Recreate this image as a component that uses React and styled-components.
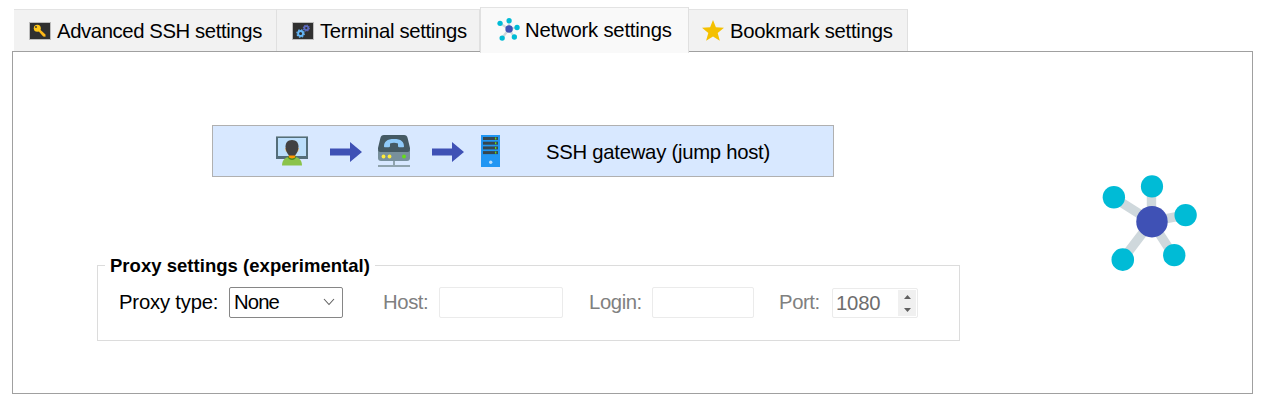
import React from "react";
import styled, { createGlobalStyle } from "styled-components";

const GlobalStyle = createGlobalStyle`
  * { box-sizing: border-box; }
  body { margin: 0; background: #fff; }
  svg { display: block; flex: none; }
`;

const Page = styled.div`
  width: 1267px;
  height: 400px;
  padding: 7px 14px 0 12px;
  background: #fff;
  color: #000;
  font: 20.3px/24px "Liberation Sans", Arial, sans-serif;
  white-space: nowrap;
`;

const TabBar = styled.div`
  display: flex;
  align-items: flex-end;
  height: 44px;
  padding-left: 2px;
`;

const Tab = styled.div`
  position: relative;
  z-index: ${(p) => (p.$active ? 1 : 0)};
  display: flex;
  align-items: center;
  flex: none;
  width: ${(p) => p.$width}px;
  height: ${(p) => (p.$active ? 46 : 42)}px;
  margin-bottom: ${(p) => (p.$active ? -2 : 0)}px;
  padding: 0 0 ${(p) => (p.$active ? 2 : 0)}px ${(p) => p.$inset || 15}px;
  border-top: 1px solid #e3e3e3;
  border-right: 1px solid #e0e0e0;
  border-left: ${(p) => (p.$active ? "1px solid #e0e0e0" : "none")};
  background: ${(p) => (p.$active ? "#f9f9f9" : "#f2f2f2")};
`;

const Label = styled.span`
  margin-left: ${(p) => p.$gap || 0}px;
  letter-spacing: ${(p) => p.$track || 0}px;
`;

const Panel = styled.div`
  display: flex;
  justify-content: space-between;
  width: 1241px;
  height: 343px;
  padding-left: 84px;
  border: 1px solid #a0a0a0;
`;

const Content = styled.div`
  display: flex;
  flex-direction: column;
  width: 863px;
  padding-top: 73px;
`;

const GatewayButton = styled.button`
  display: flex;
  align-items: center;
  width: 622px;
  height: 52px;
  margin: 0 0 0 115px;
  padding: 0 0 0 63px;
  border: 1px solid #b0b0b0;
  background: #d8e8ff;
  color: inherit;
  font: inherit;
`;

const GatewayLabel = styled(Label)`
  padding-top: 2px;
`;

const Route = styled.div`
  display: flex;
  align-items: center;
  width: 270px;
`;

const RouteArrow = styled.div`
  margin: 2px ${(p) => p.$after}px 0 22px;
`;

const ProxyGroup = styled.fieldset`
  display: block;
  min-width: 0;
  width: 863px;
  height: 87px;
  margin: 77px 0 0;
  padding: 0 0 0 21px;
  border: 1px solid #dcdcdc;
`;

const ProxyLegend = styled.legend`
  height: 22px;
  margin-left: -14px;
  padding: 0 5px;
  font-size: 18.5px;
  font-weight: bold;
  line-height: 24px;
  letter-spacing: 0.03px;
`;

const Fields = styled.div`
  display: flex;
  align-items: flex-start;
  padding-top: 11px;
  letter-spacing: -0.2px;
`;

const FieldLabel = styled.label`
  width: ${(p) => p.$width}px;
  margin-top: 3px;
  color: ${(p) => (p.$muted ? "#808080" : "#000")};
  letter-spacing: ${(p) => (p.$muted ? -0.4 : -0.2)}px;
`;

const Field = styled.div`
  display: flex;
  align-items: center;
  justify-content: space-between;
  width: ${(p) => p.$width}px;
  height: 31px;
  margin-right: ${(p) => p.$after}px;
  border: 1px solid #ebebeb;
  border-radius: 2px;
`;

const SelectBox = styled(Field)`
  padding: 0 7px 2px 4px;
  border-color: #868686;
  letter-spacing: -0.9px;
`;

const Spinner = styled(Field)`
  height: 30px;
  margin-top: 1px;
  padding: 0 1px 0 3px;
  color: #6d6d6d;
`;

const SpinButtons = styled.div`
  display: flex;
  flex-direction: column;
  align-items: center;
  justify-content: space-between;
  width: 18px;
  height: 26px;
  padding: 5px 0 4px;
  background: #f0f0f0;
`;

const Side = styled.div`
  width: 151px;
  padding-top: 123px;
`;

const TabIconFrame = ({ children }) => (
  <svg width="22" height="18" viewBox="0 0 22 18">
    <rect x=".5" y=".5" width="21" height="17" fill="#303030" stroke="#bdbdbd" />
    {children}
  </svg>
);

const KeyIcon = () => (
  <TabIconFrame>
    <path d="M8.500 8 14.200 14.400 16.500 14.800 16.500 12.500 10 6.500z" fill="#ffb818" />
    <circle cx="8.300" cy="6.300" r="3.500" fill="#ffc718" />
    <circle cx="7" cy="5" r=".9" fill="#303030" />
  </TabIconFrame>
);

const GearsIcon = () => (
  <TabIconFrame>
    <circle cx="8.600" cy="11.500" r="2.500" fill="none" stroke="#64b5f6" strokeWidth="1.900" />
    <circle cx="8.600" cy="11.500" r="3.700" fill="none" stroke="#64b5f6" strokeWidth="1.300" strokeDasharray="1.500 1.400" />
    <circle cx="14.300" cy="6.100" r="2" fill="none" stroke="#5c6bc0" strokeWidth="1.700" />
    <circle cx="14.300" cy="6.100" r="3" fill="none" stroke="#5c6bc0" strokeWidth="1.100" strokeDasharray="1.200 1.156" />
  </TabIconFrame>
);

const NetworkIcon = ({ size }) => (
  <svg width={size} height={size} viewBox="0 0 96 98">
    <path d="M12 23 50 47V12M50 47 83 40.500M50 47 21 85M50 47 72 81" fill="none" stroke="#cfd8dc" strokeWidth="9.500" />
    <g fill="#00bbd6">
      <circle cx="12" cy="22.500" r="11.300" />
      <circle cx="50.500" cy="11.500" r="11.200" />
      <circle cx="84.500" cy="40.500" r="11.300" />
      <circle cx="21" cy="85.500" r="11.400" />
      <circle cx="73" cy="81" r="11.300" />
    </g>
    <circle cx="50.500" cy="47.200" r="15.900" fill="#3f51b5" />
  </svg>
);

const StarIcon = () => (
  <svg width="22" height="21" viewBox="0 0 22 21">
    <path d="m11 0 2.900 7.300 8.100.500-6.300 5.100 2.100 7.900-6.800-4.400-6.900 4.400 2.200-7.900L0 7.800l8.100-.5z" fill="#f4c000" />
  </svg>
);

const UserIcon = () => (
  <svg width="32" height="32" viewBox="0 0 32 32">
    <path d="M0 2h32v22H0z" fill="#546e7a" />
    <path d="M0 1.500h32" stroke="#90a4ae" strokeWidth="1" />
    <path d="M2 3h28v18H2z" fill="#bbdefb" />
    <path d="M6 30.500c0-6 4-9 10-9s10 3 10 9z" fill="#8bc34a" />
    <path d="M11.500 22c2 4 7 4 9 0L19 20.500h-6z" fill="#4b8a22" />
    <path d="M12.800 18h6.400v4.300c-1.500 1.500-4.900 1.500-6.400 0z" fill="#ff9800" />
    <path d="M9.300 13h13.400l-.6 3.500H9.900z" fill="#ffa726" />
    <path d="M16 5c-4.200 0-6.500 2.800-6.500 6.500 0 4 1.700 7 3.500 9h6c1.800-2 3.500-5 3.500-9C22.500 7.800 20.200 5 16 5z" fill="#424242" />
  </svg>
);

const ArrowIcon = () => (
  <svg width="32" height="20" viewBox="0 0 32 20">
    <path d="M0 6.500h20V0l12 10-12 10v-6.500H0z" fill="#3f51b5" />
  </svg>
);

const GatewayIcon = () => (
  <svg width="32" height="32" viewBox="0 0 32 32">
    <path d="M16 25v5M0 31h32" stroke="#90a4ae" strokeWidth="2" />
    <path d="M0 15h32v8q0 3-3 3H3q-3 0-3-3z" fill="#78909c" />
    <path d="M6 0h20q3 0 3.600 3L32 13v1q0 3-2.500 3h-27Q0 17 0 14v-1L2.400 3Q3 0 6 0z" fill="#455a64" />
    <path d="M6 11.500C6 6.500 9 4 16 4s10 2.500 10 7.500q0 .7-.7.700h-4q-1.300 0-1.300-1.200V8.500q-4-1.500-8 0V11q0 1.200-1.300 1.200h-4q-.7 0-.7-.7z" fill="#90caf9" />
    <circle cx="5.500" cy="21.500" r="1.900" fill="#ffeb3b" />
    <circle cx="11.500" cy="21.500" r="1.900" fill="#ffeb3b" />
    <circle cx="26" cy="21.500" r="1.900" fill="#64dd17" />
  </svg>
);

const ServerIcon = () => (
  <svg width="19" height="32" viewBox="0 0 19 32">
    <path d="M0 0h19v32H0z" fill="#2196f3" />
    {[2, 6.7, 11.4, 16.1].map((y) => (
      <g key={y}>
        <rect x="2" y={y} width="15" height="3" fill="#37474f" />
        <rect x="14" y={y + 0.5} width="1.300" height="2" fill="#64dd17" />
      </g>
    ))}
    <circle cx="9.700" cy="27.200" r="1.700" fill="#bbdefb" />
  </svg>
);

const Chevron = () => (
  <svg width="12" height="8" viewBox="0 0 12 8">
    <path d="m1 1 5 5.500L11 1" fill="none" stroke="#606060" strokeWidth="1.100" />
  </svg>
);

const Caret = ({ down }) => (
  <svg width="7" height="4" viewBox="0 0 7 4">
    <path d={down ? "M0 0h7L3.5 4z" : "M0 4h7L3.5 0z"} fill="#606060" />
  </svg>
);

export default function App() {
  return (
    <>
      <GlobalStyle />
      <Page>
        <TabBar>
          <Tab $width={263}>
            <KeyIcon />
            <Label $gap={6} $track={-0.39}>Advanced SSH settings</Label>
          </Tab>
          <Tab $width={203}>
            <GearsIcon />
            <Label $gap={6} $track={-0.32}>Terminal settings</Label>
          </Tab>
          <Tab $width={209} $inset={16} $active>
            <NetworkIcon size={23} />
            <Label $gap={5} $track={-0.2}>Network settings</Label>
          </Tab>
          <Tab $width={219} $inset={13}>
            <StarIcon />
            <Label $gap={6} $track={-0.25}>Bookmark settings</Label>
          </Tab>
        </TabBar>
        <Panel>
          <Content>
            <GatewayButton type="button">
              <Route>
                <UserIcon />
                <RouteArrow $after={16}><ArrowIcon /></RouteArrow>
                <GatewayIcon />
                <RouteArrow $after={17}><ArrowIcon /></RouteArrow>
                <ServerIcon />
              </Route>
              <GatewayLabel $track={-0.26}>SSH gateway (jump host)</GatewayLabel>
            </GatewayButton>
            <ProxyGroup>
              <ProxyLegend>Proxy settings (experimental)</ProxyLegend>
              <Fields>
                <FieldLabel $width={110}>Proxy type:</FieldLabel>
                <SelectBox $width={114} $after={40}>
                  <span>None</span>
                  <Chevron />
                </SelectBox>
                <FieldLabel $width={56} $muted>Host:</FieldLabel>
                <Field $width={124} $after={26} />
                <FieldLabel $width={63} $muted>Login:</FieldLabel>
                <Field $width={102} $after={25} />
                <FieldLabel $width={53} $muted>Port:</FieldLabel>
                <Spinner $width={86} $after={0}>
                  <span>1080</span>
                  <SpinButtons>
                    <Caret />
                    <Caret down />
                  </SpinButtons>
                </Spinner>
              </Fields>
            </ProxyGroup>
          </Content>
          <Side>
            <NetworkIcon size={97} />
          </Side>
        </Panel>
      </Page>
    </>
  );
}
